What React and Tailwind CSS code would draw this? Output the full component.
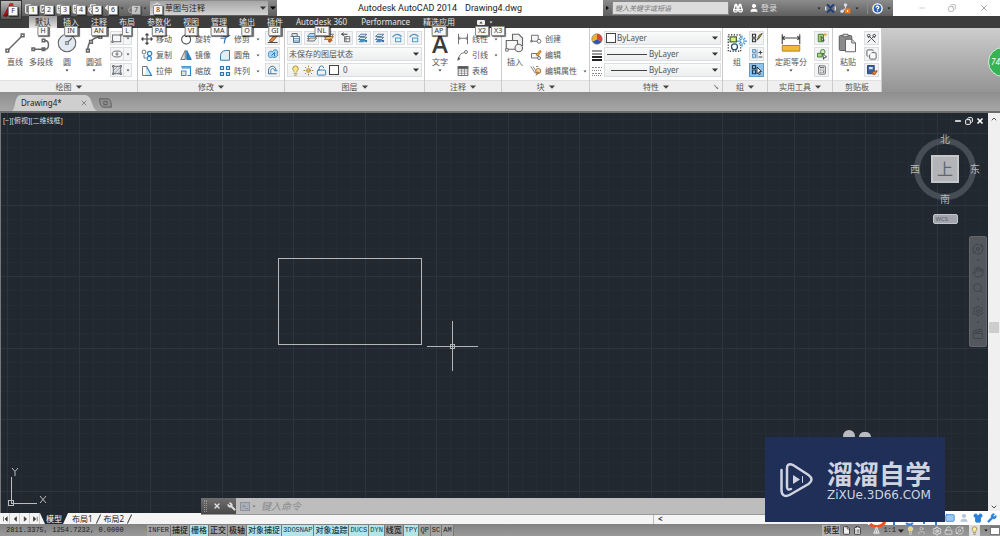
import {
  Binoculars,
  ChevronDown,
  ChevronUp,
  CircleHelp,
  ClipboardList,
  Copy,
  Minus,
  Printer,
  Redo2,
  Save,
  Settings,
  Shirt,
  Undo2,
  User,
  Wrench,
  X,
  FolderOpen,
  File,
  Keyboard,
  Lightbulb,
  Sun,
  LockOpen,
  Scissors,
  Calculator,
  Search,
  Hand,
  Orbit,
  Clapperboard,
} from "lucide-react"

const QUICK_ACCESS = [
  { tip: "1", name: "新建", Icon: File },
  { tip: "2", name: "打开", Icon: FolderOpen },
  { tip: "3", name: "保存", Icon: Save },
  { tip: "4", name: "另存为", Icon: Save },
  { tip: "5", name: "打印", Icon: Printer },
  { tip: "6", name: "放弃", Icon: Undo2, menu: true },
  { tip: "7", name: "重做", Icon: Redo2, menu: true, off: true },
]

const TABS = [
  { label: "默认", tip: "H", active: true },
  { label: "插入", tip: "IN" },
  { label: "注释", tip: "AN" },
  { label: "布局", tip: "L" },
  { label: "参数化", tip: "PA" },
  { label: "视图", tip: "VI" },
  { label: "管理", tip: "MA" },
  { label: "输出", tip: "O" },
  { label: "插件", tip: "GI" },
  { label: "Autodesk 360", tip: "NL", wide: true },
  { label: "Performance", tip: "", wide: true },
  { label: "精选应用", tip: "AP" },
]

const STATUS_TOGGLES = [
  { label: "INFER" },
  { label: "捕捉" },
  { label: "栅格", on: true },
  { label: "正交" },
  { label: "极轴" },
  { label: "对象捕捉", on: true },
  { label: "3DOSNAP", on: true },
  { label: "对象追踪", on: true },
  { label: "DUCS", on: true },
  { label: "DYN", on: true },
  { label: "线宽" },
  { label: "TPY", on: true },
  { label: "QP" },
  { label: "SC" },
  { label: "AM" },
]

const Caret = ({ className = "text-[#444]" }) => (
  <svg viewBox="0 0 6 4" className={`h-1 w-1.5 shrink-0 ${className}`}>
    <path d="M0 0.5h6L3 3.8z" fill="currentColor" />
  </svg>
)

const TinyCaret = ({ className = "text-[#555]" }) => (
  <svg viewBox="0 0 4 3" className={`h-[3px] w-1 shrink-0 ${className}`}>
    <path d="M0.5 0.5h3L2 2.6z" fill="currentColor" />
  </svg>
)

const KeyTip = ({ children }) => (
  <span className="block h-[10px] min-w-[10px] rounded-[1px] border border-[#8a8a8a] bg-[#f7f7f7] px-[2px] text-center text-[7px] leading-[8px] text-[#333] shadow-[1px_1px_1px_rgba(0,0,0,0.6)]">
    {children}
  </span>
)

// Line drawings share a 16 unit box
const Glyph = ({ className = "h-3 w-3", children }) => (
  <svg viewBox="0 0 16 16" fill="none" stroke="#666" strokeWidth="1.2" className={`shrink-0 ${className}`}>
    {children}
  </svg>
)

const icons = {
  line: (
    <>
      <path d="M2 14 14 2" />
      <rect x="0.8" y="13" width="2.2" height="2.2" fill="#fff" />
      <rect x="13" y="0.8" width="2.2" height="2.2" fill="#fff" />
    </>
  ),
  polyline: (
    <>
      <path d="M2 13h9c4 0 4-7 0-7" />
      <rect x="0.8" y="12" width="2" height="2" fill="#fff" />
      <rect x="9" y="12" width="2" height="2" fill="#fff" />
      <rect x="9" y="5" width="2" height="2" fill="#fff" />
    </>
  ),
  circle: (
    <>
      <circle cx="8" cy="8" r="7" fill="#e3e9f2" strokeWidth="0.9" />
      <path d="m8 8 4-4" strokeWidth="0.9" />
      <rect x="7" y="7" width="2" height="2" fill="#fff" strokeWidth="0.8" />
    </>
  ),
  arc: (
    <>
      <path d="M3 14C3 8 6 4 13 3" />
      <rect x="2" y="13" width="2.2" height="2.2" fill="#fff" />
      <rect x="4.5" y="6" width="2.2" height="2.2" fill="#fff" />
      <rect x="12" y="2" width="2.2" height="2.2" fill="#fff" />
    </>
  ),
  rect: (
    <>
      <rect x="2" y="4" width="11" height="9" fill="#f2f5fa" />
      <path d="M1 12h2v2H1zM12 3h2v2h-2z" fill="#fff" />
    </>
  ),
  ellipse: (
    <>
      <ellipse cx="8" cy="8" rx="6.5" ry="4" />
      <path d="M8 5.5v5M6 8h4" />
    </>
  ),
  hatch: (
    <>
      <rect x="3" y="3" width="10" height="10" fill="#dde3ea" />
      <path d="m3 9 6-6M4 13l9-9M9 13l4-4" strokeWidth="0.7" />
      <path d="M2 2h2v2H2zM12 2h2v2h-2zM2 12h2v2H2zM12 12h2v2h-2z" fill="#fff" />
    </>
  ),
  move: <path d="M8 1v14M1 8h14M6 3l2-2 2 2M6 13l2 2 2-2M3 6 1 8l2 2M13 6l2 2-2 2" stroke="#444" strokeWidth="1.5" />,
  rotate: <path d="M12 4A6 6 0 1 1 6 3l3-2M6 3l3 2" stroke="#4a4f57" strokeWidth="1.4" />,
  trim: <path d="M2 7h7M7 14c0-7 3-10 8-11M1 3l8 2" stroke="#3a78b0" strokeWidth="1.6" />,
  copy: (
    <>
      <circle cx="4" cy="4" r="2.6" />
      <circle cx="11.5" cy="6" r="2.8" stroke="#2a86c8" strokeWidth="1.6" />
      <circle cx="11" cy="12.5" r="2.8" stroke="#2a86c8" strokeWidth="1.6" />
      <path d="M4 8v4h3" />
    </>
  ),
  mirror: (
    <>
      <path d="M7 2v12H1z" fill="#dde3ea" />
      <path d="M9 2v12h6z" fill="#2a86c8" stroke="#1f6fa8" />
    </>
  ),
  fillet: <path d="M2 15V9c0-4 3-7 7-7h5v13z" fill="#e1edf7" stroke="#3a78a8" strokeWidth="1.3" />,
  stretch: (
    <>
      <path d="M2 2h6v12H2z" />
      <path d="m8 3 6 11H5" fill="#d4e8f6" stroke="#2a86c8" strokeWidth="1.6" />
    </>
  ),
  scale: (
    <>
      <path d="M2 2h12v12h-4" stroke="#2a86c8" strokeWidth="1.6" />
      <path d="M2 2h12v3H2z" fill="#63addd" stroke="none" />
      <rect x="2" y="8" width="6" height="6" fill="#d4e8f6" stroke="#2a86c8" />
    </>
  ),
  array: (
    <path d="M2 2h4v4H2zM10 2h4v4h-4zM2 10h4v4H2zM10 10h4v4h-4z" fill="#d4e8f6" stroke="#2a78b0" strokeWidth="1.6" />
  ),
  erase: (
    <>
      <path d="m3 12 8-9 3 2-7 8z" fill="#d98a4b" stroke="#8b4a20" />
      <path d="M1 14h13" stroke="#333" />
    </>
  ),
  explode: (
    <>
      <path d="M2 9c-1-4 3-6 5-4 3-5 9-2 7 2 2 4-4 7-7 5-3 2-6 0-5-3z" fill="#a9d3ee" stroke="#2a86c8" />
      <path d="m6 10 4-4v5" stroke="#2a6fa8" />
    </>
  ),
  offset: (
    <>
      <path d="M2 13h11M2 13V9c0-8 10-8 10 0" stroke="#3a5f80" />
      <path d="M5 13V9c0-4 5-4 5 0h4" stroke="#2a86c8" />
    </>
  ),
  layers: (
    <>
      <path d="M5 5h9l-3 4H2z" fill="#fff" />
      <path d="M5 8h9l-3 4H2z" fill="#dbe8f3" />
      <path d="M5 2h9l-3 4H2z" fill="#b9d7ec" stroke="#3a7fb0" />
    </>
  ),
  layerTable: (
    <>
      <path d="M4 2h7v4H4zM2 6h7" fill="#cfe0ee" />
      <path d="M6 6h8v8H6zM6 9h8M6 12h8" fill="#fff" stroke="#3f6e93" />
    </>
  ),
  layerOrange: (
    <>
      <path d="M5 3h9l-3 4H2z" fill="#fff" />
      <path d="M5 6h9l-3 4H2z" fill="#eec06a" stroke="#a76b2c" />
      <path d="m7 12 3-3 2 2-3 3z" fill="#d06030" stroke="#8b4a20" />
    </>
  ),
  layerBack: (
    <>
      <path d="M6 6h7v7H6zM8 6v7M6 9h7" fill="#fff" />
      <path d="M10 3H2m3-2L2 3l3 2" stroke="#333" />
    </>
  ),
  layerBlue: (
    <>
      <path d="M5 3h8l-3 3H2zM5 7h8l-3 3H2z" fill="#dbe8f3" stroke="#4f7390" />
      <path d="M5 11h6l-2 2H3z" fill="#55a5dd" stroke="#2a78b0" />
      <circle cx="12" cy="12" r="1.6" fill="#2a78b0" stroke="none" />
    </>
  ),
  layerFree: (
    <>
      <path d="M2 7c3-5 8-5 12-1" stroke="#4a91c4" strokeWidth="1.6" />
      <rect x="6" y="8" width="7" height="5" fill="#e5f1fa" stroke="#4a91c4" />
    </>
  ),
  dimension: <path d="M2 1v14M14 1v14M2 7h12M4 5 2 7l2 2M12 5l2 2-2 2" />,
  leader: (
    <>
      <path d="M2 14C3 8 5 5 10 5" />
      <path d="m1 15 1-4 2 2z" fill="#555" />
      <circle cx="12" cy="4" r="2" />
    </>
  ),
  table: (
    <>
      <rect x="1.5" y="2" width="13" height="12" fill="#fff" />
      <path d="M1.5 2h13v3h-13z" fill="#555" />
      <path d="M1.5 8h13M1.5 11h13M6 5v9M10 5v9" strokeWidth="0.8" />
    </>
  ),
  insert: (
    <>
      <path d="M6 1h5l3 3v6H6z" fill="#f0f0f0" strokeWidth="0.9" />
      <path d="M1 6h9v7H1z" fill="#f8f8f8" strokeWidth="0.9" />
      <circle cx="11" cy="12" r="3" fill="#f0f0f0" strokeWidth="0.9" />
      <path d="M0.5 12.5h2v2h-2z" fill="#fff" strokeWidth="0.7" />
    </>
  ),
  block: (
    <>
      <path d="M2 3h9v8H2z" fill="#f3f5f8" />
      <circle cx="12" cy="11" r="2.6" fill="#fff" />
      <path d="M1 10h2v2H1z" fill="#fff" />
    </>
  ),
  blockEdit: (
    <>
      <path d="M2 6h9v6H2z" fill="#f3f5f8" />
      <path d="m8 8 5-6 2 1-4 6z" fill="#f0a040" stroke="#c07820" />
      <circle cx="12" cy="12" r="2" fill="#fff" />
    </>
  ),
  attributes: (
    <>
      <path d="m1 2 6 9 3-3M4 2l4 6M8 2h3" stroke="#777" />
      <circle cx="11" cy="8" r="3.4" fill="#f1d9a8" stroke="#9b6b39" />
      <path d="m8 14 2-5 2 1z" fill="#e08b40" stroke="#8d5a30" strokeWidth="0.8" />
    </>
  ),
  group: (
    <>
      <rect x="1" y="1.5" width="10" height="13" strokeDasharray="1 1.2" stroke="#222" strokeWidth="0.9" />
      <path d="M2.5 3h5v4h-5z" fill="#e5f07a" stroke="#3f6a35" strokeWidth="1" />
      <circle cx="6" cy="11" r="2.4" stroke="#245070" strokeWidth="1" />
      <path d="M12 2v3M12 8v3M8 6.5h3M13 6.5h3M9.5 4l1.5 1.5M14.5 4 13 5.5M9.5 9l1.5-1.5M14.5 9 13 7.5" stroke="#3c9be6" strokeWidth="0.9" />
    </>
  ),
  ungroup: (
    <>
      <path d="M2 3h4v4H2zM2 9h4v4H2z" stroke="#333" strokeWidth="1.6" />
      <path d="m8 11 3-7 4-2-4 6z" fill="#a8c04a" stroke="#5b4a26" />
    </>
  ),
  groupEdit: (
    <>
      <path d="M2 2h4v4H2zM2 8h4v5H2zM8 2v12" fill="#b9d7ec" stroke="#5c90b8" />
      <path d="M10 6h5M12.500 3.500v5M10 12h5" stroke="#333" />
    </>
  ),
  groupSelect: (
    <>
      <path d="M2 2h4v4H2zM2 8h4v5H2z" stroke="#1d3a55" strokeWidth="1.6" />
      <path d="m8 4 6 6-3 .4 1.500 3-1.500 1-1.500-3L8 13z" fill="#fff" stroke="#222" />
    </>
  ),
  measure: (
    <>
      <path d="M1 1v8M15 1v8M1 4h14M3 2.500 1 4l2 1.500M13 2.500 15 4l-2 1.500" stroke="#444" strokeWidth="0.9" />
      <path d="M1 10h14v4.500H1z" fill="#f0b93a" stroke="#b8841c" strokeWidth="0.8" />
    </>
  ),
  quickSelect: (
    <>
      <path d="M3 3h7v10H3z" fill="#9fce6a" stroke="#3d7a30" />
      <path d="m7 6 4 5H7z" fill="#fff" stroke="#333" />
      <path d="M12 1v5M10 3.500h5" stroke="#d8a020" />
    </>
  ),
  selectAll: (
    <>
      <path d="M2 7h6v5H2z" fill="#a9d77a" stroke="#3d7a30" />
      <circle cx="9" cy="5" r="3" fill="#d5eac2" stroke="#3d7a30" />
      <path d="m9 7 5 5-3 1-1 2z" fill="#fff" stroke="#333" />
    </>
  ),
  paste: (
    <>
      <rect x="1" y="2" width="10" height="12" rx="1" fill="#8b8b8b" stroke="#5c5c5c" strokeWidth="0.8" />
      <path d="M4 1h4v2H4z" fill="#ddd" strokeWidth="0.8" />
      <path d="M6 5h5l3 3v7H6z" fill="#fafafa" strokeWidth="0.8" />
      <path d="M11 5v3h3" strokeWidth="0.8" />
    </>
  ),
  matchProps: (
    <>
      <path d="M2 2h9v11H2z" fill="#3c5f9a" stroke="#2b426e" />
      <path d="M4 4h5v3H4z" fill="#cfe0ff" stroke="none" />
      <path d="m8 13 2-3 5-1-3 5z" fill="#e88b38" stroke="#9a4f18" />
    </>
  ),
}

const IconButton = ({ name, icon, children, active }) => (
  <button
    aria-label={name}
    className={`flex h-[14px] w-[15px] shrink-0 items-center justify-center border ${
      active ? "border-[#5a9bd0] bg-[#8fc4ee]" : "border-[#dcdfe2] bg-[#f1f3f4]"
    }`}
  >
    {icon ? <Glyph>{icons[icon]}</Glyph> : children}
  </button>
)

const SplitButton = ({ name, icon }) => (
  <div className="flex border border-[#dcdfe2] bg-[#f4f5f6]">
    <button aria-label={name} className="flex h-3 w-3 items-center justify-center">
      <Glyph>{icons[icon]}</Glyph>
    </button>
    <button aria-label={`${name}选项`} className="flex h-3 w-2 items-center justify-center border-l border-[#dcdfe2]">
      <TinyCaret />
    </button>
  </div>
)

const ToolRow = ({ icon, label, menu }) => (
  <button className="flex h-4 items-center gap-[3px] whitespace-nowrap">
    <Glyph>{icons[icon]}</Glyph>
    {label}
    {menu && <TinyCaret className="ml-[3px] text-[#555]" />}
  </button>
)

const BigTool = ({ icon, label, menu, className = "w-6", children }) => (
  <button className={`flex shrink-0 flex-col items-center pt-[2px] whitespace-nowrap ${className}`}>
    {icon ? <Glyph className="h-5 w-5">{icons[icon]}</Glyph> : children}
    <span className="mt-1 leading-[10px]">{label}</span>
    {menu && <TinyCaret className="mt-[2px] text-[#333]" />}
  </button>
)

const Dropdown = ({ label, value, className = "", selectClass = "pl-[2px]", children }) => (
  <div className={`relative h-[14px] border border-[#dcdfe2] bg-linear-to-b from-[#fafafa] to-[#eceeef] ${className}`}>
    <select aria-label={label} className={`block h-full w-full appearance-none text-[8px] leading-3 outline-none ${selectClass}`}>
      <option>{value}</option>
    </select>
    <div className="pointer-events-none absolute inset-y-0 left-[2px] flex items-center gap-[2px]">{children}</div>
    <Caret className="pointer-events-none absolute top-1 right-[2px] text-[#333]" />
  </div>
)

const Panel = ({ title, className, menu = true, launcher, children }) => (
  <section className={`flex shrink-0 flex-col border-r border-[#c9cbcd] bg-white ${className}`}>
    <div className="flex h-[52px] pt-[3px]">{children}</div>
    <div className="relative flex h-3 items-center justify-center gap-1 border-t border-[#e0e0e0] bg-[#efefef]">
      {title}
      {menu && <Caret />}
      {launcher && <span className="absolute right-[3px] text-[6px] leading-[8px]">↘</span>}
    </div>
  </section>
)

const TitleBar = () => (
  <header className="flex h-4 shrink-0 bg-linear-to-b from-[#8c8c8c] to-[#5f5f5f]">
    <div className="flex w-[277px] shrink-0">
      <div className="relative w-[22px]">
        <button
          aria-label="应用程序菜单"
          className="absolute top-0 left-0 z-10 h-5 w-[22px] border border-[#333] bg-linear-to-b from-[#bbb] to-[#555]"
        >
          <svg viewBox="0 0 20 18" className="h-[18px] w-5">
            <path d="M2 15 9 2l2 4-4 9z" fill="#a8141a" />
            <path d="M9 2h3l3 13h-4z" fill="#d8252b" />
            <path d="m2 15 9-5v3l-6 3z" fill="#7a0c10" />
          </svg>
          <span className="absolute top-[5px] left-[7px]">
            <KeyTip>F</KeyTip>
          </span>
        </button>
      </div>
      <div className="flex w-[128px] items-center pl-[2px]">
        {QUICK_ACCESS.map(({ tip, name, Icon, menu, off }) => (
          <button key={tip} aria-label={name} className={`relative h-4 w-4 shrink-0 ${menu ? "mr-[7px]" : ""}`}>
            <Icon strokeWidth={3} className={`mt-[2px] h-[10px] w-[10px] ${off ? "text-[#999]" : "text-[#eee]"}`} />
            <span className={`absolute top-[5px] left-1 ${off ? "opacity-60" : ""}`}>
              <KeyTip>{tip}</KeyTip>
            </span>
            {menu && <TinyCaret className="absolute top-[7px] -right-1 text-[#333]" />}
          </button>
        ))}
      </div>
      <div className="relative my-px flex-1 bg-linear-to-b from-[#a5a5a5] to-[#d2d2d2]">
        <select aria-label="工作空间" className="block h-full w-full appearance-none pl-[15px] text-[8px] text-[#222] outline-none">
          <option>草图与注释</option>
        </select>
        <Settings className="pointer-events-none absolute top-px left-[2px] h-[10px] w-[10px] text-[#eee]" />
        <span className="pointer-events-none absolute top-1 left-[3px]">
          <KeyTip>8</KeyTip>
        </span>
        <Caret className="pointer-events-none absolute top-[5px] right-[2px] text-[#333]" />
      </div>
      <button aria-label="自定义快速访问工具栏" className="flex w-[9px] items-center justify-center">
        <Caret className="text-black" />
      </button>
    </div>
    <h1 className="flex min-w-0 flex-1 items-center justify-center gap-2 bg-white font-['Roboto',sans-serif] text-[9px] whitespace-nowrap text-[#222]">
      <span>Autodesk AutoCAD 2014</span>
      <span>Drawing4.dwg</span>
    </h1>
    <div className="flex w-[290px] shrink-0 items-center *:shrink-0">
      <svg viewBox="0 0 4 6" className="mx-[3px] h-[6px] w-[3px]">
        <path d="M0 0v6l4-3z" fill="#111" />
      </svg>
      <input
        aria-label="搜索"
        placeholder="键入关键字或短语"
        className="h-[14px] w-[117px] border border-[#888] bg-[#dcdcdc] px-[2px] text-[7px] italic outline-none placeholder:text-[#777]"
      />
      <Binoculars strokeWidth={3} className="ml-1 h-[10px] w-[10px] text-white" />
      <User className="ml-1.5 h-[10px] w-[10px] fill-white text-white" />
      <a href="#login" className="ml-[2px] whitespace-nowrap text-[#ddd]">
        登录
      </a>
      <TinyCaret className="ml-10 text-[#222]" />
      <svg viewBox="0 0 16 16" className="ml-1 h-[11px] w-[11px]">
        <path d="m3 2 5 5 5-5M3 14l5-5 5 5" stroke="#1f3f7a" strokeWidth="3" fill="none" />
        <path d="M1 5v6M15 5v6" stroke="#d4def0" strokeWidth="2" />
      </svg>
      <svg viewBox="0 0 16 16" className="ml-1 h-[11px] w-[11px]">
        <path d="M8 4v4M3 12l5-4" stroke="#ddd" strokeWidth="1.5" />
        <circle cx="8" cy="3" r="2.500" fill="#d4def0" />
        <circle cx="3" cy="12" r="2.500" fill="#d4def0" />
        <rect x="7" y="8" width="8" height="7" fill="#ef7a22" />
        <path d="M11 10v3" stroke="#fff" strokeWidth="1.5" />
      </svg>
      <TinyCaret className="ml-1 text-[#222]" />
      <span className="ml-2 h-3 w-px bg-[#888]" />
      <CircleHelp strokeWidth={3} className="ml-1 h-[11px] w-[11px] fill-[#2b5fb4] text-white" />
      <TinyCaret className="ml-1 text-[#222]" />
    </div>
    <div className="flex w-[107px] shrink-0 items-center justify-around bg-white pl-[14px] text-[#999]">
      <button aria-label="最小化">
        <Minus strokeWidth={1.5} className="h-2 w-2" />
      </button>
      <button aria-label="还原">
        <Copy strokeWidth={2} className="h-2 w-2 -scale-x-100" />
      </button>
      <button aria-label="关闭">
        <X strokeWidth={2} className="h-[10px] w-[10px]" />
      </button>
    </div>
  </header>
)

const TabBar = () => (
  <nav className="flex h-3 shrink-0 bg-[#3d3d3d] pl-[29px] text-[#e4e4e4]">
    {TABS.map((tab) => (
      <button
        key={tab.label}
        className={`relative h-3 leading-3 whitespace-nowrap ${tab.wide ? "px-[7px]" : "px-[6px]"} ${
          tab.active ? "bg-linear-to-b from-[#9d9d9d] to-[#e6e6e6] text-[#222]" : ""
        }`}
      >
        {tab.label}
        {tab.tip && (
          <span className="absolute top-[10px] left-1/2 z-10 -translate-x-1/2">
            <KeyTip>{tab.tip}</KeyTip>
          </span>
        )}
      </button>
    ))}
    <div className="relative ml-4 flex w-6 items-center gap-1">
      <svg viewBox="0 0 8 5" className="h-[5px] w-2">
        <rect width="8" height="5" rx="1" fill="#eee" />
        <path d="M2.500 3.500 4 1.500l1.500 2z" fill="#333" />
      </svg>
      <TinyCaret className="text-[#ddd]" />
      <span className="absolute top-[10px] -left-[2px] z-10 flex gap-[2px]">
        <KeyTip>X2</KeyTip>
        <KeyTip>X3</KeyTip>
      </span>
    </div>
  </nav>
)

const LAYER_TOOLS = [
  ["图层特性", "layerTable"],
  ["置为当前", "layers"],
  ["匹配", "layerOrange"],
  ["上一个", "layerBack"],
  ["隔离", "layerBlue"],
  ["取消隔离", "layerBlue"],
  ["冻结", "layerFree"],
  ["关闭图层", "layerFree"],
]

const Ribbon = () => (
  <div className="flex h-16 shrink-0 bg-linear-to-b from-[#cdcdcd] to-[#949494] text-[#555]">
    <Panel title="绘图" className="w-[138px]">
      <BigTool icon="line" label="直线" className="ml-[3px] w-6" />
      <BigTool icon="polyline" label="多段线" className="ml-[2px] w-6" />
      <BigTool icon="circle" label="圆" menu className="ml-[2px] w-6" />
      <BigTool icon="arc" label="圆弧" menu className="ml-[3px] w-6" />
      <div className="ml-1 flex flex-col gap-[2px]">
        <SplitButton name="矩形" icon="rect" />
        <SplitButton name="椭圆" icon="ellipse" />
        <SplitButton name="图案填充" icon="hatch" />
      </div>
    </Panel>
    <Panel title="修改" className="w-[147px]">
      <div className="ml-[3px] w-[39px]">
        <ToolRow icon="move" label="移动" />
        <ToolRow icon="copy" label="复制" />
        <ToolRow icon="stretch" label="拉伸" />
      </div>
      <div className="w-[39px]">
        <ToolRow icon="rotate" label="旋转" />
        <ToolRow icon="mirror" label="镜像" />
        <ToolRow icon="scale" label="缩放" />
      </div>
      <div className="w-[46px]">
        <ToolRow icon="trim" label="修剪" menu />
        <ToolRow icon="fillet" label="圆角" menu />
        <ToolRow icon="array" label="阵列" menu />
      </div>
      <div className="flex flex-col gap-[2px]">
        <IconButton name="删除" icon="erase" />
        <IconButton name="分解" icon="explode" />
        <IconButton name="偏移" icon="offset" />
      </div>
    </Panel>
    <Panel title="图层" className="w-[140px]">
      <div className="flex flex-1 flex-col gap-[2px] px-[2px]">
        <div className="flex justify-between">
          {LAYER_TOOLS.map(([name, icon]) => (
            <IconButton key={name} name={name} icon={icon} />
          ))}
        </div>
        <Dropdown label="图层状态" value="未保存的图层状态" selectClass="pl-px" />
        <Dropdown label="图层" value="0" selectClass="pl-[55px]">
          <Lightbulb className="h-[11px] w-[11px] fill-[#fbe58a] text-[#a08a30]" />
          <Sun className="h-[11px] w-[11px] fill-[#f6c85a] text-[#a07830]" />
          <LockOpen className="h-[11px] w-[11px] text-[#2a78b0]" />
          <span className="h-[10px] w-[10px] border border-[#444] bg-white" />
        </Dropdown>
      </div>
    </Panel>
    <Panel title="注释" className="w-[77px]">
      <BigTool label="文字" menu className="ml-[3px] w-6">
        <span className="h-5 font-['Open_Sans',sans-serif] text-[24px] leading-[22px] font-semibold text-[#3c3c3c]">A</span>
      </BigTool>
      <div className="ml-[5px]">
        <ToolRow icon="dimension" label="线性" menu />
        <ToolRow icon="leader" label="引线" menu />
        <ToolRow icon="table" label="表格" />
      </div>
    </Panel>
    <Panel title="块" className="w-[88px]">
      <BigTool icon="insert" label="插入" className="ml-px w-6" />
      <div className="ml-[3px]">
        <ToolRow icon="block" label="创建" />
        <ToolRow icon="blockEdit" label="编辑" />
        <ToolRow icon="attributes" label="编辑属性" menu />
      </div>
    </Panel>
    <Panel title="特性" className="w-[133px]" launcher>
      <div className="flex w-[14px] flex-col items-center">
        <svg viewBox="0 0 16 16" className="my-[2px] h-3 w-3">
          <path d="M8 8V1a7 7 0 0 1 6 10.500z" fill="#e04434" />
          <path d="M8 8 14 11.500A7 7 0 0 1 2 11.500z" fill="#3158b0" />
          <path d="M8 8 2 11.500A7 7 0 0 1 8 1z" fill="#e8b42c" />
          <circle cx="8" cy="8" r="7" fill="none" stroke="#777" strokeWidth="0.8" />
        </svg>
        <svg viewBox="0 0 10 12" className="my-[2px] h-3 w-[10px]">
          <path d="M0 2h10M0 5h10" stroke="#333" />
          <path d="M0 8h10M0 11h10" stroke="#222" strokeWidth="2" />
        </svg>
        <svg viewBox="0 0 10 12" className="my-[2px] h-3 w-[10px]">
          <path d="M0 2.500h10M0 8.500h10" stroke="#888" strokeDasharray="2 1" />
          <path d="M0 5.500h10M0 10.500h10" stroke="#888" strokeDasharray="1 1" />
        </svg>
      </div>
      <div className="flex flex-1 flex-col gap-[2px] pr-px">
        <Dropdown label="对象颜色" value="ByLayer" selectClass="pl-3">
          <span className="-ml-px h-[10px] w-[10px] border border-[#444] bg-white" />
        </Dropdown>
        <Dropdown label="线宽" value="ByLayer" selectClass="pl-11">
          <span className="h-px w-10 bg-[#444]" />
        </Dropdown>
        <Dropdown label="线型" value="ByLayer" selectClass="pl-11">
          <span className="ml-1 h-px w-9 bg-[#444]" />
        </Dropdown>
      </div>
    </Panel>
    <Panel title="组" className="w-[45px]">
      <BigTool icon="group" label="组" className="ml-[2px] w-6" />
      <div className="flex flex-col gap-[2px]">
        <IconButton name="解除编组" icon="ungroup" />
        <IconButton name="组编辑" icon="groupEdit" />
        <IconButton name="启用组选择" icon="groupSelect" active />
      </div>
    </Panel>
    <Panel title="实用工具" className="w-[65px]">
      <BigTool icon="measure" label="定距等分" menu className="ml-[3px] w-10" />
      <div className="ml-[3px] flex flex-col gap-[2px]">
        <IconButton name="快速选择" icon="quickSelect" />
        <IconButton name="全部选择" icon="selectAll" />
        <IconButton name="计算器">
          <Calculator className="h-[10px] w-[10px]" />
        </IconButton>
      </div>
    </Panel>
    <Panel title="剪贴板" className="w-[49px]" menu={false}>
      <BigTool icon="paste" label="粘贴" menu className="ml-[3px] w-6" />
      <div className="ml-1 flex flex-col gap-[2px]">
        <IconButton name="剪切">
          <Scissors className="h-[11px] w-[11px] rotate-90 text-[#444]" />
        </IconButton>
        <IconButton name="复制">
          <Copy className="h-[11px] w-[11px] fill-white" />
        </IconButton>
        <IconButton name="特性匹配" icon="matchProps" />
      </div>
    </Panel>
  </div>
)

const FileTabs = () => (
  <div className="flex h-[21px] shrink-0 items-end border-b-2 border-[#6c6c6c] bg-linear-to-b from-[#8e8e8e] to-[#a6a6a6] pl-3">
    <div className="relative flex h-4 w-[86px] items-center justify-between pr-[10px] pl-[9px] text-[#222]">
      <svg viewBox="0 0 86 16" preserveAspectRatio="none" className="absolute inset-0 h-full w-full">
        <path d="M0 16C4 14 2 0 9 0h64c8 0 6 15 13 16z" fill="#cfcfcf" />
      </svg>
      <span className="relative">Drawing4*</span>
      <button aria-label="关闭图形" className="relative">
        <X strokeWidth={3} className="h-2 w-2 text-[#888]" />
      </button>
    </div>
    <button aria-label="新图形" className="mb-[3px]">
      <svg viewBox="0 0 16 12" className="h-[10px] w-[15px]">
        <path d="M1 1h10c3 0 4 5 4 10H6C2 11 1 6 1 1z" fill="#909090" stroke="#555" />
        <path d="M6 4h4v4H6z" fill="none" stroke="#555" />
      </svg>
    </button>
  </div>
)

// Five minor cells to one major, two majors to one tile
const Grid = () => (
  <svg className="absolute inset-0 h-full w-full">
    <defs>
      <pattern id="grid" x="6" y="20" width="143" height="143" patternUnits="userSpaceOnUse">
        {[14, 29, 43, 57, 86, 100, 115, 129].map((n) => (
          <g key={n} fill="#242c36">
            <rect x={n} y="0" width="1" height="143" />
            <rect x="0" y={n} width="143" height="1" />
          </g>
        ))}
        {[0, 72].map((n) => (
          <g key={n} fill="#2c353f">
            <rect x={n} y="0" width="1" height="143" />
            <rect x="0" y={n} width="143" height="1" />
          </g>
        ))}
      </pattern>
    </defs>
    <rect width="100%" height="100%" fill="url(#grid)" />
    <g fill="none" stroke="#b4b7ba">
      <rect x="277.500" y="145.500" width="143" height="86" />
      <path d="M426 233.500h51M451.500 208v50" />
      <rect x="449.500" y="231.500" width="4" height="4" />
    </g>
  </svg>
)

const ViewCube = () => (
  <div className="absolute top-[21px] right-2 flex w-[70px] flex-col items-center text-[10px] leading-[10px] text-[#b3b6ba]">
    <div className="relative h-[70px] w-[70px]">
      <div className="absolute inset-1 rounded-full border-[6px] border-[#474d55]" />
      <span className="absolute inset-x-0 top-0 text-center">北</span>
      <span className="absolute inset-x-0 bottom-0 text-center">南</span>
      <span className="absolute top-[30px] left-0">西</span>
      <span className="absolute top-[30px] right-0">东</span>
      <button className="absolute top-[21px] left-[21px] h-7 w-7 border-2 border-[#c6c7c9] bg-[#b3b4b7] text-[16px] leading-[22px] text-[#62666c]">
        上
      </button>
    </div>
    <button className="mt-[10px] h-[10px] w-[25px] rounded-[2px] border border-[#c3c4cc] bg-[#a2a4ae] pl-[2px] text-left text-[6px] leading-[8px] text-[#5a5d66]">
      WCS
    </button>
  </div>
)

const NavigationBar = () => (
  <div className="absolute top-[123px] right-px flex h-[111px] w-[18px] flex-col items-center justify-around rounded-[2px] border border-[#62676d] bg-[#53585e] py-1 text-[#40454b]">
    <Orbit className="h-3 w-3" />
    <TinyCaret className="text-[#40454b]" />
    <Hand className="h-3 w-3" />
    <Search className="h-3 w-3" />
    <TinyCaret className="text-[#40454b]" />
    <Settings className="h-3 w-3" />
    <TinyCaret className="text-[#40454b]" />
    <Clapperboard className="h-3 w-3" />
  </div>
)

const CommandLine = () => (
  <div className="absolute right-[55px] -bottom-[2px] left-[200px] z-10 flex h-[17px] border-b border-[#999] bg-[#bdbdbd]">
    <div className="flex w-[35px] items-center gap-[6px] bg-linear-to-b from-[#707070] to-[#484848] pl-[3px] text-[#ddd]">
      <span className="h-3 w-[3px] shrink-0 border-x border-dotted border-[#999]" />
      <X strokeWidth={4} className="h-2 w-2 shrink-0" />
      <Wrench className="h-[9px] w-[9px] shrink-0 -scale-x-100 fill-[#ddd]" />
    </div>
    <div className="ml-1 flex items-center gap-[2px]">
      <span className="h-[9px] w-[10px] border border-[#8d929c] bg-[#a9aeb8] text-center text-[6px] leading-[7px] text-[#555]">&gt;_</span>
      <TinyCaret className="text-[#777]" />
    </div>
    <input
      aria-label="命令行"
      placeholder="键入命令"
      className="ml-[5px] min-w-0 flex-1 text-[10px] italic outline-none placeholder:text-[#8a8a8a]"
    />
  </div>
)

const Viewport = () => (
  <main className="relative flex min-h-0 flex-1 border-l border-[#777] bg-[#212830]">
    <div className="relative flex-1 overflow-hidden">
      <Grid />
      <p className="absolute top-[3px] left-[2px] text-[7px] leading-[9px] text-[#ddd]">[−][俯视][二维线框]</p>
      <div className="absolute top-1 right-1 flex gap-[3px] text-white">
        <button aria-label="最小化视口">
          <Minus strokeWidth={5} className="h-2 w-2" />
        </button>
        <button aria-label="还原视口">
          <Copy strokeWidth={3} className="h-2 w-2 -scale-x-100" />
        </button>
        <button aria-label="关闭视口">
          <X strokeWidth={5} className="h-2 w-2" />
        </button>
      </div>
      <ViewCube />
      <NavigationBar />
      <svg viewBox="0 0 48 48" fill="none" stroke="#b9bcc0" className="absolute bottom-1 left-1 h-12 w-12">
        <path d="M6.500 16v26M6 42.500h26" shapeRendering="crispEdges" />
        <rect x="3.500" y="39.500" width="5" height="5" />
        <path d="m7 7 3 3.500L13 7M10 10.500V15M35 35l6 7M41 35l-6 7" />
      </svg>
    </div>
    <div className="relative flex w-3 flex-col items-center justify-between bg-[#f0f0f0] py-[2px] text-[#555]">
      <ChevronUp className="h-2 w-2" strokeWidth={3} />
      <span className="absolute top-[209px] left-px h-[11px] w-[10px] bg-[#cdcdcd]" />
      <ChevronDown className="h-2 w-2" strokeWidth={3} />
    </div>
    <CommandLine />
  </main>
)

const LayoutTabs = () => (
  <div className="flex h-[11px] shrink-0 items-center bg-[#f4f4f4] text-[#222]">
    {["M7 1 4 4l3 3zM2 1v6", "M6 1 3 4l3 3z", "M3 1l3 3-3 3z", "M2 1l3 3-3 3zM7 1v6"].map((d) => (
      <button key={d} aria-label="切换布局" className="flex h-full w-[10px] items-center justify-center border-r border-[#ccc]">
        <svg viewBox="0 0 8 8" className="h-[6px] w-[6px]">
          <path d={d} fill="#333" stroke="#333" strokeWidth="0.8" />
        </svg>
      </button>
    ))}
    <button className="relative flex h-full w-7 items-center justify-center text-white">
      <svg viewBox="0 0 28 11" className="absolute inset-0 h-full w-full">
        <path d="M0 0h28l-5 11H5z" fill="#212830" />
      </svg>
      <span className="relative">模型</span>
    </button>
    <button className="ml-1 leading-[11px]">布局1</button>
    <span className="mx-[5px] h-[10px] w-px rotate-[25deg] bg-[#444]" />
    <button className="leading-[11px]">布局2</button>
    <span className="mx-[5px] h-[10px] w-px rotate-[25deg] bg-[#444]" />
    <span className="ml-auto flex h-full w-[347px] items-center border-l border-[#bbb] pl-1 text-[#333]">
      <span className="font-bold">&lt;</span>
    </span>
  </div>
)

const StatusBar = () => (
  <footer className="flex h-3 shrink-0 items-center bg-linear-to-b from-[#828282] to-[#9a9a9a] pt-px font-['Liberation_Mono','Noto_Sans_CJK_SC',monospace] text-[#222]">
    <output className="w-[147px] pl-[6px] text-[7px] leading-[11px] whitespace-pre">2811.3375, 1254.7232, 0.0000</output>
    {STATUS_TOGGLES.map(({ label, on }) => (
      <button
        key={label}
        className={`h-[11px] border-r border-[#777] px-px leading-[11px] font-medium whitespace-nowrap ${
          /[A-Z]/.test(label) ? "text-[7px]" : ""
        } ${on ? "bg-[#b5e3ea] text-[#123c48]" : "bg-[#a4a4a4] text-[#222]"}`}
      >
        {label}
      </button>
    ))}
    <div className="ml-auto flex items-center gap-[2px] *:shrink-0">
      <button className="bg-[#b5b5b5] px-px leading-[11px] font-medium">模型</button>
      <File className="h-[9px] w-[9px] fill-[#eee]" />
      <ClipboardList className="h-[9px] w-[9px] fill-[#eee]" />
      <svg viewBox="0 0 10 10" className="ml-2 h-[9px] w-[9px]">
        <path d="M5 1 2 8h6zM5 5v3" fill="#aaa" stroke="#eee" />
      </svg>
      <span className="text-[7px] leading-[11px]">1:1</span>
      <Caret className="text-[#222]" />
      <Lightbulb className="h-[9px] w-[9px] fill-[#f5d26a] text-[#e6e6e6]" />
      <User className="h-[9px] w-[9px] text-[#ccc]" />
      <Settings className="ml-1 h-[10px] w-[10px] text-[#eee]" />
      <LockOpen className="h-[9px] w-[9px] text-[#e6e6e6]" />
      <Orbit className="h-[9px] w-[9px] text-[#ddd]" />
      <span className="ml-[3px] flex h-[11px] w-[11px] items-center justify-center bg-[#ddd]">
        <Lightbulb className="h-[9px] w-[9px] fill-[#fff0a0] text-[#8a7a30]" />
      </span>
      <TinyCaret className="ml-[2px] text-black" />
      <span className="h-[9px] w-[10px] border border-t-2 border-[#777] bg-white" />
    </div>
  </footer>
)

const InputMethodBar = () => (
  <div className="absolute right-0 bottom-[11px] z-20 flex h-[14px] w-[132px] items-center justify-end gap-1 bg-white pr-[3px] text-[#2c7fd6]">
    <svg viewBox="0 0 80 6" className="absolute -bottom-[2px] left-0 h-[6px] w-20">
      <path d="M2 3c4 4 12 3 15-2" stroke="#ef5020" strokeWidth="3" fill="none" />
      <path d="M26 0v4M38 2c2 2 5 2 7 0M56 1v2M68 0v4" stroke="#2c7fd6" strokeWidth="2" fill="none" />
    </svg>
    <Keyboard className="h-[10px] w-[10px] fill-[#9cc8f4]" />
    <User className="h-[10px] w-[10px] fill-[#b5c4d8] text-[#b5c4d8]" />
    <Shirt className="h-[10px] w-[10px] fill-[#2c7fd6]" />
    <Wrench className="h-[10px] w-[10px] fill-[#2c7fd6]" />
  </div>
)

const Watermark = () => (
  <aside className="absolute right-[55px] bottom-[14px] z-30 flex h-[85px] w-[180px] items-center bg-[#1f2f58] pl-[14px] text-[#d0d4df]">
    <svg viewBox="0 0 36 36" fill="none" stroke="currentColor" strokeWidth="2.5" strokeLinejoin="round" strokeLinecap="round" className="h-9 w-9">
      <path d="M2.500 8v20c0 6 4 7 8 5l19-11c4-3 4-6 0-9L14 3C10 1 8 3 8 6v19c0 3 2 3 4 2" />
      <path d="M14 13v9l7-4.500z" fill="currentColor" stroke="none" />
      <path d="M23.500 14.500v6" strokeWidth="1" />
    </svg>
    <div className="ml-3">
      <p className="text-[26px] leading-[30px] font-bold">溜溜自学</p>
      <p className="font-['DejaVu_Sans',sans-serif] text-[12px] leading-3 whitespace-nowrap">ZiXUe.3D66.COM</p>
    </div>
  </aside>
)

const App = () => (
  <div className="relative flex h-screen flex-col overflow-hidden bg-[#8f8f8f] font-['Noto_Sans','Noto_Sans_CJK_SC',sans-serif] text-[8px] leading-[10px]">
    <TitleBar />
    <TabBar />
    <Ribbon />
    <FileTabs />
    <Viewport />
    <LayoutTabs />
    <StatusBar />
    <InputMethodBar />
    <div className="absolute right-[129px] bottom-[94px] z-20 flex items-end gap-1">
      <span className="h-3 w-3 rounded-full bg-[#b9bbbe]" />
      <span className="h-[10px] w-3 rounded-full bg-[#b9bbbe]" />
    </div>
    <Watermark />
    <div className="absolute top-[47px] -right-[18px] h-[30px] w-[30px] rounded-full border border-[#d5efd9] bg-[#35b455] pl-[2px] leading-7 text-white italic">
      74
    </div>
  </div>
)

export default App
